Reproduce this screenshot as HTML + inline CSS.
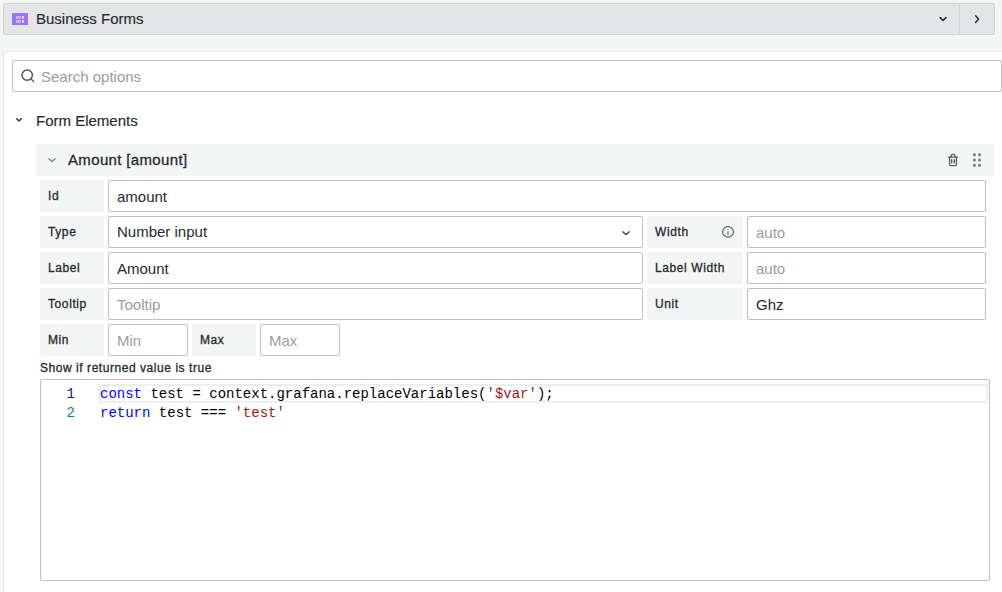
<!DOCTYPE html>
<html><head><meta charset="utf-8">
<style>
*{box-sizing:border-box;margin:0;padding:0}
html,body{width:1002px;height:592px;overflow:hidden;background:#f4f5f5;font-family:"Liberation Sans",sans-serif;color:#24292e}
.a{position:absolute;white-space:pre}
.hdr{left:3px;top:3px;width:992px;height:32px;background:#e4e5e6;border:1px solid #d2d3d5;border-radius:2px}
.panel{left:3px;top:51px;width:1100px;height:600px;background:#fff;border:1px solid #e6e7e8;border-radius:2px}
.inp{background:#fff;border:1px solid #bfc0c2;border-radius:2px;height:32px}
.lbl{background:#f4f5f5;border-radius:2px;height:32px}
.lt{font-size:12px;line-height:14px;-webkit-text-stroke:0.3px #24292e;letter-spacing:0.6px}
.t15{font-size:15px;line-height:18px}
.med{font-size:15px;line-height:18px;-webkit-text-stroke:0.3px #24292e;letter-spacing:0.35px}
.ph{color:#9a9c9f}
.mono{font-family:"Liberation Mono",monospace;font-size:14px;line-height:19px}
</style></head><body>
<!-- header -->
<div class="a hdr"></div>
<svg class="a" style="left:12px;top:13px" width="16" height="12" viewBox="0 0 16 12"><rect width="16" height="12" fill="#a072f7"/><g fill="#d6c4fc"><rect x="4" y="3" width="0.9" height="2.8"/><rect x="5.3" y="3" width="1.6" height="2.8"/><rect x="7.3" y="3" width="1.6" height="2.8"/><rect x="4" y="7" width="0.9" height="2.8"/><rect x="5.3" y="7" width="1.6" height="2.8"/><rect x="7.3" y="7" width="1.6" height="2.8"/></g><g fill="#e3d8fd"><rect x="10" y="3" width="2" height="2.8"/><rect x="10" y="7" width="2" height="2.8"/></g></svg>
<div class="a t15" style="left:36px;top:9px;line-height:20px;-webkit-text-stroke:0.15px #24292e">Business Forms</div>
<div class="a" style="left:959px;top:4px;width:1px;height:30px;background:#d2d3d5"></div>
<svg class="a" style="left:935px;top:11px" width="16" height="16" viewBox="0 0 16 16"><path d="M5.1 6.6 L8 9.5 L10.9 6.6" fill="none" stroke="#24292e" stroke-width="1.5" stroke-linecap="round" stroke-linejoin="round"/></svg>
<svg class="a" style="left:969px;top:11px" width="16" height="16" viewBox="0 0 16 16"><path d="M6.6 4.8 L9.6 8.1 L6.6 11.4" fill="none" stroke="#24292e" stroke-width="1.5" stroke-linecap="round" stroke-linejoin="round"/></svg>

<!-- panel -->
<div class="a panel"></div>
<div class="a inp" style="left:12px;top:60px;width:990px"></div>
<svg class="a" style="left:19px;top:67px" width="16" height="16" viewBox="0 0 16 16"><circle cx="8.2" cy="8.1" r="5.2" fill="none" stroke="#55585c" stroke-width="1.5"/><path d="M12.1 12 L14.6 14.5" stroke="#55585c" stroke-width="1.4" stroke-linecap="round"/></svg>
<div class="a t15 ph" style="left:41px;top:68px">Search options</div>

<svg class="a" style="left:11px;top:112px" width="16" height="16" viewBox="0 0 16 16"><path d="M5.7 6.7 L8 9 L10.3 6.7" fill="none" stroke="#2c3136" stroke-width="1.4" stroke-linecap="round" stroke-linejoin="round"/></svg>
<div class="a t15" style="left:36px;top:112px;-webkit-text-stroke:0.15px #24292e">Form Elements</div>

<div class="a" style="left:36px;top:144px;width:958px;height:32px;background:#f4f5f5;border-radius:2px"></div>
<svg class="a" style="left:44px;top:152px" width="16" height="16" viewBox="0 0 16 16"><path d="M4.9 6.7 L8 9.6 L11.1 6.7" fill="none" stroke="#7c7f83" stroke-width="1.3" stroke-linecap="round" stroke-linejoin="round"/></svg>
<div class="a med" style="left:68px;top:151px">Amount [amount]</div>
<svg class="a" style="left:945px;top:152px" width="16" height="16" viewBox="0 0 16 16"><g fill="none" stroke="#5b5e62" stroke-width="1.3" stroke-linejoin="round" stroke-linecap="round"><path d="M3.4 5.2 H12.6"/><path d="M6 5 V4 A1.6 1.6 0 0 1 7.6 2.4 H8.4 A1.6 1.6 0 0 1 10 4 V5"/><path d="M4.6 5.4 V12.4 Q4.6 13.6 5.8 13.6 H10.2 Q11.4 13.6 11.4 12.4 V5.4"/></g><path d="M6.5 7.2 V11.4 M9.5 7.2 V11.4" stroke="#5b5e62" stroke-width="1"/><rect x="7" y="7.2" width="2" height="4.2" fill="#b9bbbe"/></svg>
<svg class="a" style="left:969px;top:152px" width="16" height="16" viewBox="0 0 16 16"><g fill="#76797d"><circle cx="5.4" cy="2.7" r="1.5"/><circle cx="10.5" cy="2.7" r="1.5"/><circle cx="5.4" cy="7.9" r="1.5"/><circle cx="10.5" cy="7.9" r="1.5"/><circle cx="5.4" cy="13.3" r="1.5"/><circle cx="10.5" cy="13.3" r="1.5"/></g></svg>

<!-- row 1 -->
<div class="a lbl" style="left:40px;top:180px;width:64px"></div>
<div class="a lt" style="left:48px;top:189px">Id</div>
<div class="a inp" style="left:108px;top:180px;width:878px"></div>
<div class="a t15" style="left:117px;top:188px">amount</div>

<!-- row 2 -->
<div class="a lbl" style="left:40px;top:216px;width:64px"></div>
<div class="a lt" style="left:48px;top:225px">Type</div>
<div class="a inp" style="left:108px;top:216px;width:535px"></div>
<div class="a t15" style="left:117px;top:223px">Number input</div>
<svg class="a" style="left:618px;top:225px" width="16" height="16" viewBox="0 0 16 16"><path d="M4.7 6.7 L8 9.6 L11.3 6.7" fill="none" stroke="#4b4f54" stroke-width="1.4" stroke-linecap="round" stroke-linejoin="round"/></svg>
<div class="a lbl" style="left:647px;top:216px;width:96px"></div>
<div class="a lt" style="left:655px;top:225px">Width</div>
<svg class="a" style="left:720px;top:224px" width="16" height="16" viewBox="0 0 16 16"><circle cx="8" cy="7.9" r="5.3" fill="none" stroke="#5a5d61" stroke-width="1.2"/><path d="M8 7.8 V10.4" stroke="#6c6f73" stroke-width="1.2" stroke-linecap="round"/><circle cx="8" cy="5.6" r="0.65" fill="#7a7d81"/></svg>
<div class="a inp" style="left:747px;top:216px;width:239px"></div>
<div class="a t15 ph" style="left:756px;top:224px">auto</div>

<!-- row 3 -->
<div class="a lbl" style="left:40px;top:252px;width:64px"></div>
<div class="a lt" style="left:48px;top:261px">Label</div>
<div class="a inp" style="left:108px;top:252px;width:535px"></div>
<div class="a t15" style="left:117px;top:260px">Amount</div>
<div class="a lbl" style="left:647px;top:252px;width:96px"></div>
<div class="a lt" style="left:655px;top:261px">Label Width</div>
<div class="a inp" style="left:747px;top:252px;width:239px"></div>
<div class="a t15 ph" style="left:756px;top:260px">auto</div>

<!-- row 4 -->
<div class="a lbl" style="left:40px;top:288px;width:64px"></div>
<div class="a lt" style="left:48px;top:297px">Tooltip</div>
<div class="a inp" style="left:108px;top:288px;width:535px"></div>
<div class="a t15 ph" style="left:117px;top:296px">Tooltip</div>
<div class="a lbl" style="left:647px;top:288px;width:96px"></div>
<div class="a lt" style="left:655px;top:297px">Unit</div>
<div class="a inp" style="left:747px;top:288px;width:239px"></div>
<div class="a t15" style="left:756px;top:296px">Ghz</div>

<!-- row 5 -->
<div class="a lbl" style="left:40px;top:324px;width:64px"></div>
<div class="a lt" style="left:48px;top:333px">Min</div>
<div class="a inp" style="left:108px;top:324px;width:80px"></div>
<div class="a t15 ph" style="left:117px;top:332px">Min</div>
<div class="a lbl" style="left:192px;top:324px;width:64px"></div>
<div class="a lt" style="left:200px;top:333px">Max</div>
<div class="a inp" style="left:260px;top:324px;width:80px"></div>
<div class="a t15 ph" style="left:269px;top:332px">Max</div>

<div class="a lt" style="left:40px;top:361px;letter-spacing:0.55px">Show if returned value is true</div>

<!-- editor -->
<div class="a" style="left:40px;top:379px;width:950px;height:202px;border:1px solid #bfc0c2;border-radius:2px;background:#fff"></div>
<div class="a" style="left:99px;top:384px;width:889px;height:19px;border:2px solid #eeeeee"></div>
<div class="a mono" style="left:61px;top:385px;width:14px;text-align:right;color:#0b216f">1</div>
<div class="a mono" style="left:61px;top:404px;width:14px;text-align:right;color:#237893">2</div>
<div class="a mono" style="left:100px;top:385px;color:#000"><span style="color:#0000ff">const</span> test = context.grafana.replaceVariables(<span style="color:#a31515">'$var'</span>);</div>
<div class="a mono" style="left:100px;top:404px;color:#000"><span style="color:#0000ff">return</span> test === <span style="color:#a31515">'test'</span></div>
</body></html>
